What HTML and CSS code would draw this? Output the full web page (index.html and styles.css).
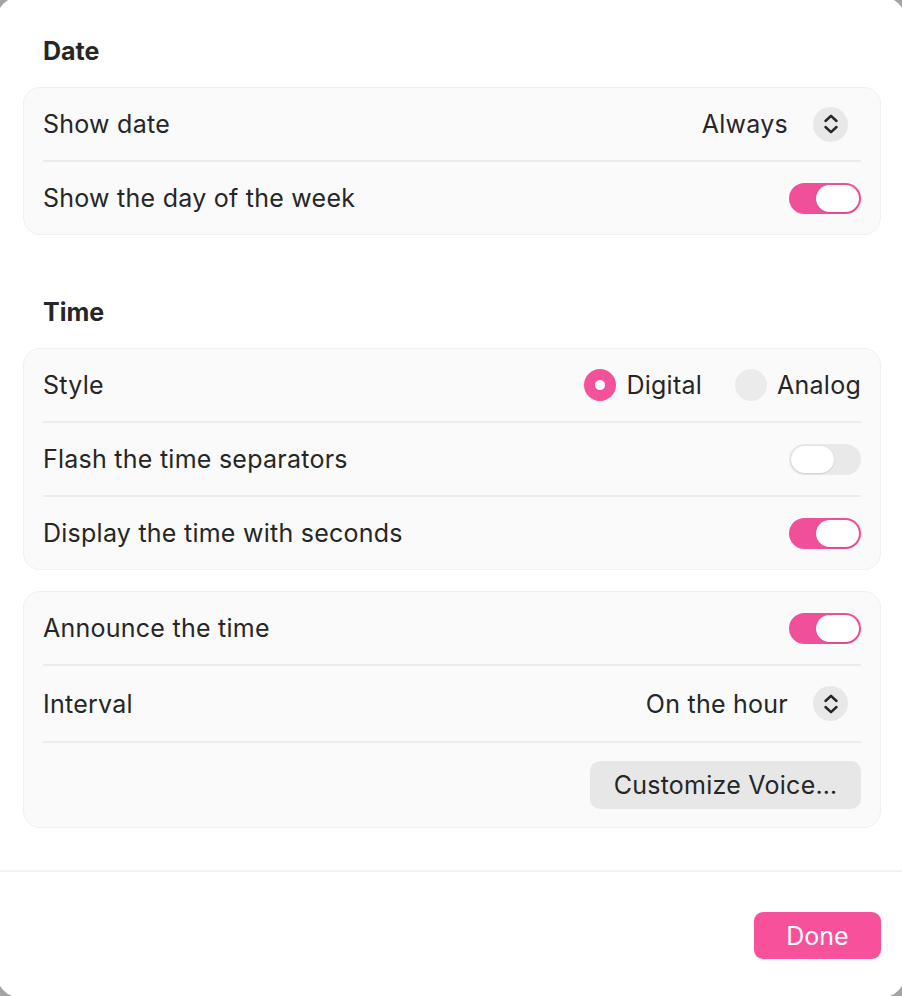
FILE: index.html
```html
<!DOCTYPE html>
<html>
<head>
<meta charset="utf-8">
<link rel="stylesheet" href="styles.css">
</head>
<body>
<div class="sheet">
  <div class="content">
    <h2 class="heading">Date</h2>
    <div class="card">
      <div class="row">
        <span class="label">Show date</span>
        <div class="picker"><span class="value">Always</span><span class="stepper"><svg width="16" height="22" viewBox="0 0 16 22"><path d="M2.5 8 L8 2.8 L13.5 8 M2.5 14 L8 19.2 L13.5 14" fill="none" stroke="#262626" stroke-width="2.5" stroke-linecap="round" stroke-linejoin="round"/></svg></span></div>
      </div>
      <div class="row">
        <span class="label">Show the day of the week</span>
        <span class="toggle on"><span class="knob"></span></span>
      </div>
    </div>

    <h2 class="heading time-heading">Time</h2>
    <div class="card">
      <div class="row">
        <span class="label">Style</span>
        <div class="radios">
          <span class="radio-item"><span class="radio checked"></span>Digital</span>
          <span class="radio-item"><span class="radio"></span>Analog</span>
        </div>
      </div>
      <div class="row">
        <span class="label">Flash the time separators</span>
        <span class="toggle"><span class="knob"></span></span>
      </div>
      <div class="row">
        <span class="label">Display the time with seconds</span>
        <span class="toggle on"><span class="knob"></span></span>
      </div>
    </div>

    <div class="card card-gap">
      <div class="row">
        <span class="label">Announce the time</span>
        <span class="toggle on"><span class="knob"></span></span>
      </div>
      <div class="row row-tall">
        <span class="label">Interval</span>
        <div class="picker"><span class="value">On the hour</span><span class="stepper"><svg width="16" height="22" viewBox="0 0 16 22"><path d="M2.5 8 L8 2.8 L13.5 8 M2.5 14 L8 19.2 L13.5 14" fill="none" stroke="#262626" stroke-width="2.5" stroke-linecap="round" stroke-linejoin="round"/></svg></span></div>
      </div>
      <div class="row row-button">
        <button class="btn">Customize Voice…</button>
      </div>
    </div>
  </div>
  <div class="footer">
    <button class="done">Done</button>
  </div>
</div>
</body>
</html>
```

FILE: styles.css
```css
html, body {
  margin: 0;
  padding: 0;
  height: 100%;
  overflow: hidden;
}
body {
  background: #a4a4a4;
  font-family: Inter, "Noto Sans", "Liberation Sans", sans-serif;
  color: #262626;
}
.sheet {
  margin: -4px -4px 0 -4px;
  height: 1002px;
  background: #ffffff;
  border-radius: 26px;
  display: flex;
  flex-direction: column;
}
.content {
  padding: 38px 25px 0 27px;
  flex: 1;
}
.heading {
  margin: 0 0 0 20px;
  font-size: 25px;
  font-weight: 700;
  line-height: 34px;
}
.heading + .card {
  margin-top: 19px;
}
.time-heading {
  margin-top: 60px;
}
.card {
  background: #fafafa;
  border: 1px solid #f0f0f0;
  border-radius: 17px;
  padding: 0 19px;
}
.card-gap {
  margin-top: 21px;
}
.row {
  display: flex;
  align-items: center;
  justify-content: space-between;
  height: 72px;
  border-bottom: 2px solid #ececec;
  font-size: 25px;
  letter-spacing: 0.25px;
}
.row:last-child {
  border-bottom: none;
}
.row-tall {
  height: 75px;
}
.row-button {
  height: 84px;
  justify-content: flex-end;
}
.picker {
  display: flex;
  align-items: center;
  gap: 25px;
  margin-right: 13px;
}
.stepper {
  width: 35px;
  height: 35px;
  border-radius: 50%;
  background: #e8e8e8;
  display: flex;
  align-items: center;
  justify-content: center;
}
.toggle {
  width: 72px;
  height: 31px;
  border-radius: 16px;
  background: #e9e9e9;
  box-sizing: border-box;
  padding: 2px;
  display: flex;
  justify-content: flex-start;
}
.toggle.on {
  background: #f0509a;
  justify-content: flex-end;
}
.knob {
  width: 43px;
  height: 27px;
  border-radius: 14px;
  background: #ffffff;
  box-shadow: 0 0.5px 1.5px rgba(0,0,0,0.18);
}
.radios {
  display: flex;
  align-items: center;
  gap: 33px;
}
.radio-item {
  display: flex;
  align-items: center;
  gap: 10px;
}
.radio {
  width: 32px;
  height: 32px;
  border-radius: 50%;
  background: #ebebeb;
}
.radio.checked {
  background: radial-gradient(circle, #ffffff 0 4.5px, #f4519b 5.5px);
}
.btn {
  font-family: inherit;
  font-size: 25px;
  letter-spacing: 0.25px;
  color: #262626;
  background: #e7e7e7;
  border: none;
  border-radius: 10px;
  height: 48px;
  width: 271px;
  padding: 0;
}
.footer {
  border-top: 2px solid #f2f2f2;
  height: 126px;
  display: flex;
  justify-content: flex-end;
  padding: 40px 25px 0 0;
  box-sizing: border-box;
  margin-bottom: 2px;
}
.done {
  font-family: inherit;
  font-size: 25px;
  color: #ffffff;
  background: #f7519c;
  border: none;
  border-radius: 9px;
  width: 127px;
  height: 47px;
}
```
